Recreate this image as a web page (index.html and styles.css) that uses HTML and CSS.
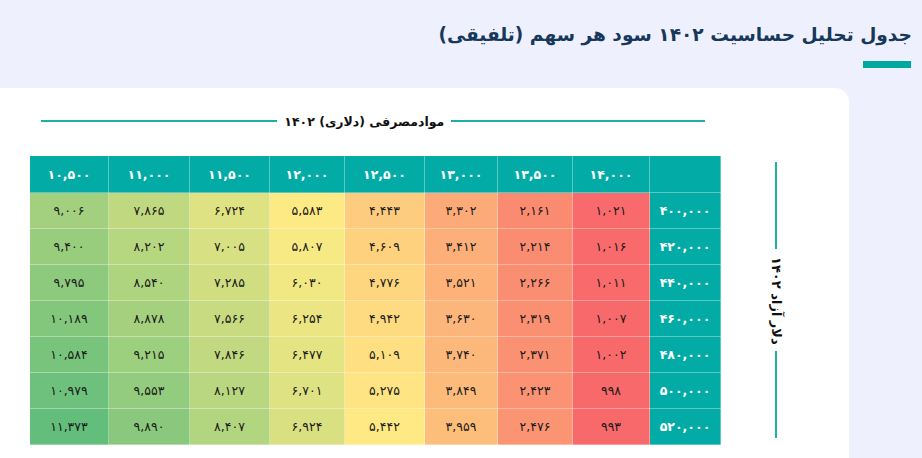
FILE: index.html
```html
<!DOCTYPE html>
<html lang="fa">
<head>
<meta charset="utf-8">
<title>جدول تحلیل حساسیت</title>
<link rel="stylesheet" href="styles.css">
</head>
<body>
<header class="head">
  <h1 class="title" dir="rtl">جدول تحلیل حساسیت ۱۴۰۲ سود هر سهم (تلفیقی)</h1>
  <div class="title-bar"></div>
</header>
<main class="card">
  <div class="grid">
    <div class="sub">
      <span class="sub-line sub-line-left"></span>
      <span class="sub-text" dir="rtl">موادمصرفی (دلاری) ۱۴۰۲</span>
      <span class="sub-line sub-line-right"></span>
    </div>
    <div class="spacer"></div>
    <table class="heat" dir="rtl">
      <colgroup>
        <col class="c71"><col class="c77"><col class="c75"><col class="c73"><col class="c80"><col class="c75"><col class="c80"><col class="c81"><col class="c79">
      </colgroup>
      <thead>
        <tr><th></th><th>۱۴,۰۰۰</th><th>۱۳,۵۰۰</th><th>۱۳,۰۰۰</th><th>۱۲,۵۰۰</th><th>۱۲,۰۰۰</th><th>۱۱,۵۰۰</th><th>۱۱,۰۰۰</th><th>۱۰,۵۰۰</th></tr>
      </thead>
      <tbody>
        <tr><th>۴۰۰,۰۰۰</th><td>۱,۰۲۱</td><td>۲,۱۶۱</td><td>۳,۳۰۲</td><td>۴,۴۴۳</td><td>۵,۵۸۳</td><td>۶,۷۲۴</td><td>۷,۸۶۵</td><td>۹,۰۰۶</td></tr>
        <tr><th>۴۲۰,۰۰۰</th><td>۱,۰۱۶</td><td>۲,۲۱۴</td><td>۳,۴۱۲</td><td>۴,۶۰۹</td><td>۵,۸۰۷</td><td>۷,۰۰۵</td><td>۸,۲۰۲</td><td>۹,۴۰۰</td></tr>
        <tr><th>۴۴۰,۰۰۰</th><td>۱,۰۱۱</td><td>۲,۲۶۶</td><td>۳,۵۲۱</td><td>۴,۷۷۶</td><td>۶,۰۳۰</td><td>۷,۲۸۵</td><td>۸,۵۴۰</td><td>۹,۷۹۵</td></tr>
        <tr><th>۴۶۰,۰۰۰</th><td>۱,۰۰۷</td><td>۲,۳۱۹</td><td>۳,۶۳۰</td><td>۴,۹۴۲</td><td>۶,۲۵۴</td><td>۷,۵۶۶</td><td>۸,۸۷۸</td><td>۱۰,۱۸۹</td></tr>
        <tr><th>۴۸۰,۰۰۰</th><td>۱,۰۰۲</td><td>۲,۳۷۱</td><td>۳,۷۴۰</td><td>۵,۱۰۹</td><td>۶,۴۷۷</td><td>۷,۸۴۶</td><td>۹,۲۱۵</td><td>۱۰,۵۸۴</td></tr>
        <tr><th>۵۰۰,۰۰۰</th><td>۹۹۸</td><td>۲,۴۲۳</td><td>۳,۸۴۹</td><td>۵,۲۷۵</td><td>۶,۷۰۱</td><td>۸,۱۲۷</td><td>۹,۵۵۳</td><td>۱۰,۹۷۹</td></tr>
        <tr><th>۵۲۰,۰۰۰</th><td>۹۹۳</td><td>۲,۴۷۶</td><td>۳,۹۵۹</td><td>۵,۴۴۲</td><td>۶,۹۲۴</td><td>۸,۴۰۷</td><td>۹,۸۹۰</td><td>۱۱,۳۷۳</td></tr>
      </tbody>
    </table>
    <div class="side">
      <span class="side-line"></span>
      <span class="side-text" dir="rtl">دلار آزاد ۱۴۰۲</span>
      <span class="side-line"></span>
    </div>
  </div>
</main>
<script src="script.js"></script>
</body>
</html>
```
FILE: styles.css
```css
* { box-sizing: border-box; }
html, body { margin: 0; padding: 0; }
body {
  background: #eef1fd;
  font-family: "DejaVu Sans", "Noto Sans", sans-serif;
  width: 922px;
  height: 458px;
  overflow: hidden;
}
.head {
  display: flex;
  flex-direction: column;
  align-items: flex-end;
  padding: 20px 10px 0 0;
}
.title {
  margin: 0;
  font-size: 18.6px;
  line-height: 30px;
  font-weight: bold;
  color: #17385a;
}
.title-bar {
  width: 48px;
  height: 7px;
  background: #00a99f;
  margin-top: 11px;
  margin-right: 1px;
}
.card {
  margin: 20px 73px 0 0;
  background: #ffffff;
  border-top-right-radius: 14px;
  height: 370px;
  padding: 0 0 0 29px;
}
.grid {
  display: grid;
  grid-template-columns: 691px 30px;
  column-gap: 41px;
  padding-top: 22px;
}
.sub {
  display: flex;
  align-items: center;
  gap: 5px;
  height: 22px;
  margin: 0 15px 23px 12px;
}
.sub-line {
  height: 2px;
  background: #1fb0a5;
}
.sub-line-left { flex: 244; }
.sub-line-right { flex: 262; }
.sub-text {
  font-size: 12.5px;
  font-weight: bold;
  color: #111;
  white-space: nowrap;
  padding: 0 2px;
}
.heat {
  width: 691px;
  table-layout: fixed;
  border-collapse: collapse;
  font-size: 12.5px;
}
.c71 { width: 71px; } .c73 { width: 73px; } .c75 { width: 75px; } .c77 { width: 77px; }
.c79 { width: 79px; } .c80 { width: 80px; } .c81 { width: 81px; }
.heat th, .heat td {
  border: 1px solid rgba(255, 255, 255, 0.35);
  text-align: center;
  padding: 0;
}
.heat thead tr { height: 37px; }
.heat tbody tr { height: 36px; }
.heat th {
  background: #02aba5;
  color: #ffffff;
  font-weight: bold;
}
.heat td { color: #1a1a1a; }
.side {
  display: flex;
  flex-direction: column;
  align-items: center;
  padding: 7px 0;
}
.side-line {
  flex: 1;
  width: 2px;
  background: #1fb0a5;
}
.side-text {
  writing-mode: vertical-rl;
  font-size: 13px;
  font-weight: bold;
  color: #111;
  margin: 8px 0 7px;
  white-space: nowrap;
}
```
FILE: script.js
```js
(function () {
  var map = { '۰': '0', '۱': '1', '۲': '2', '۳': '3', '۴': '4', '۵': '5', '۶': '6', '۷': '7', '۸': '8', '۹': '9' };
  var cells = Array.prototype.slice.call(document.querySelectorAll('.heat tbody td'));
  var vals = cells.map(function (c) {
    var s = c.textContent.replace(/[۰-۹]/g, function (d) { return map[d]; }).replace(/,/g, '');
    return parseFloat(s);
  });
  var sorted = vals.slice().sort(function (a, b) { return a - b; });
  var n = sorted.length;
  var min = sorted[0], max = sorted[n - 1];
  var pos = 0.5 * (n - 1), lo = Math.floor(pos), hi = Math.ceil(pos);
  var mid = sorted[lo] + (sorted[hi] - sorted[lo]) * (pos - lo);
  var red = [248, 105, 107], yel = [255, 235, 132], grn = [99, 190, 123];
  function mix(a, b, t) {
    return a.map(function (v, i) { return Math.round(v + (b[i] - v) * t); });
  }
  cells.forEach(function (c, i) {
    var v = vals[i], col;
    if (v <= mid) col = mix(red, yel, (v - min) / (mid - min));
    else col = mix(yel, grn, (v - mid) / (max - mid));
    c.style.backgroundColor = 'rgb(' + col.join(',') + ')';
  });
})();
```
